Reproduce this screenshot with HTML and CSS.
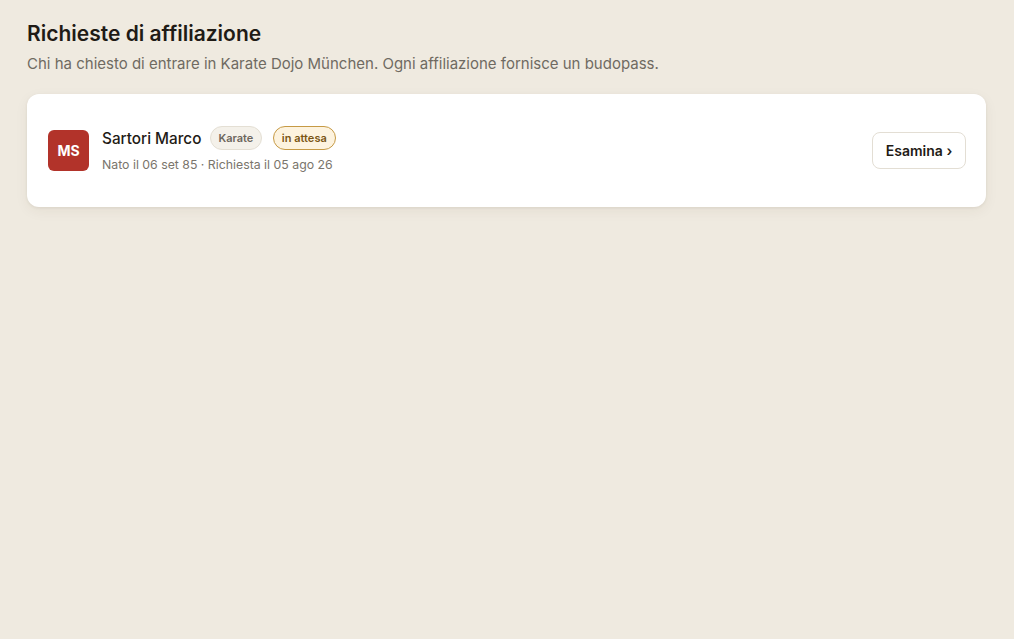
FILE: index.html
```html
<!DOCTYPE html>
<html lang="it">
<head>
<meta charset="utf-8">
<title>Richieste di affiliazione</title>
<link rel="stylesheet" href="styles.css">
</head>
<body>
<main class="page">
  <header class="page-head">
    <h1 class="title">Richieste di affiliazione</h1>
    <p class="subtitle">Chi ha chiesto di entrare in Karate Dojo München. Ogni affiliazione fornisce un budopass.</p>
  </header>
  <section class="card">
    <div class="request">
      <div class="avatar">MS</div>
      <div class="info">
        <div class="name-row">
          <span class="name">Sartori Marco</span>
          <span class="tag">Karate</span>
          <span class="status">in attesa</span>
        </div>
        <div class="meta">Nato il 06 set 85 · Richiesta il 05 ago 26</div>
      </div>
      <button class="review" type="button">Esamina ›</button>
    </div>
  </section>
</main>
</body>
</html>
```

FILE: styles.css
```css
* { box-sizing: border-box; }

html, body {
  margin: 0;
  height: 100%;
}

body {
  background: #efeae0;
  font-family: Inter, "Noto Sans", "Liberation Sans", sans-serif;
  color: #1f1b16;
}

.page {
  padding: 20px 28px 0 27px;
}

.page-head {
  margin-bottom: 20px;
}

.title {
  margin: 0;
  font-size: 21px;
  font-weight: 600;
  line-height: 28px;
}

.subtitle {
  margin: 6px 0 0;
  font-size: 15px;
  line-height: 20px;
  color: #6f6a62;
}

.card {
  background: #fff;
  border-radius: 12px;
  box-shadow: 0 1px 3px rgba(60, 45, 20, 0.08), 0 4px 14px rgba(60, 45, 20, 0.06);
  padding: 32px 20px 32px 21px;
}

.request {
  display: flex;
  align-items: center;
}

.avatar {
  width: 41px;
  height: 41px;
  border-radius: 6px;
  background: #b2332a;
  color: #fff;
  font-weight: 700;
  font-size: 14px;
  display: flex;
  align-items: center;
  justify-content: center;
  flex-shrink: 0;
}

.info {
  flex: 1;
  margin-left: 13px;
}

.name-row {
  display: flex;
  align-items: center;
  gap: 8.5px;
  height: 24px;
}

.name {
  font-size: 15.3px;
  font-weight: 500;
  color: #1f1b16;
}

.tag {
  font-size: 11px;
  font-weight: 600;
  color: #6c665c;
  background: #f4f1ea;
  border: 1px solid #e4dfd4;
  border-radius: 999px;
  padding: 4px 7.5px;
  line-height: 14px;
}

.status {
  margin-left: 2.5px;
  font-size: 11px;
  font-weight: 600;
  color: #7a5513;
  background: #fdf3df;
  border: 1px solid #c69a45;
  border-radius: 999px;
  padding: 4px 8px;
  line-height: 14px;
}

.meta {
  margin-top: 5px;
  font-size: 12.3px;
  color: #7a756c;
  line-height: 20px;
}

.review {
  font-family: inherit;
  font-size: 14px;
  font-weight: 600;
  color: #1f1b16;
  background: #fff;
  border: 1px solid #e3ded4;
  border-radius: 8px;
  height: 37px;
  width: 94px;
  padding: 0;
  cursor: pointer;
}
```
